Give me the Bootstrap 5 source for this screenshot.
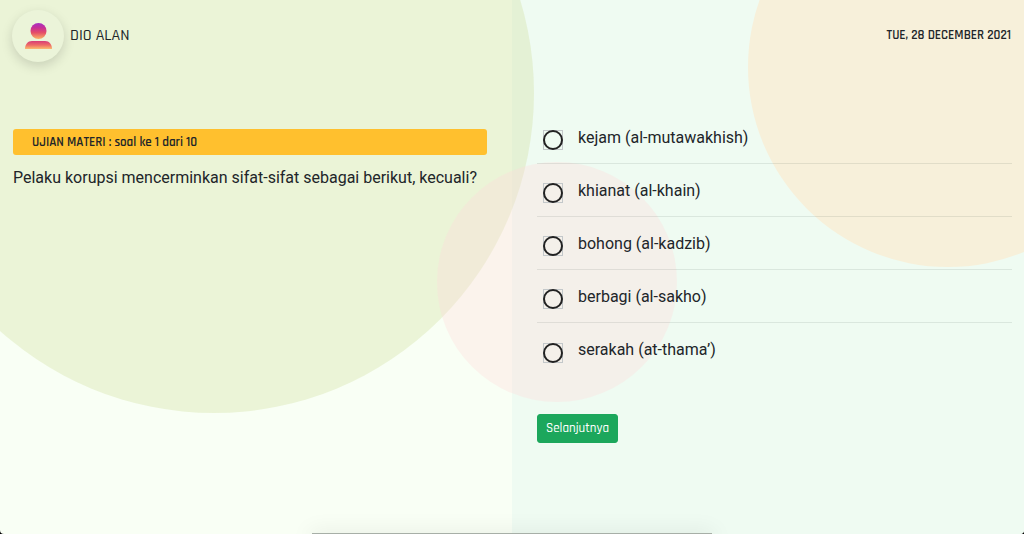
<!DOCTYPE html>
<html lang="id">
<head>
<meta charset="utf-8">
<meta name="viewport" content="width=device-width, initial-scale=1">
<title>Ujian Materi</title>
<link href="https://cdn.jsdelivr.net/npm/bootstrap@5.3.0/dist/css/bootstrap.min.css" rel="stylesheet">
<style>
  html { background: #000; }
  body { background: transparent; font-family: Rajdhani, Roboto, sans-serif; color: #212529; }
  .exam-page { background: #f9fff5; border-radius: 0 0 4px 4px; isolation: isolate; }
  /* decorative backdrop */
  .backdrop { z-index: -1; }
  .disc { position: absolute; border-radius: 50%; }
  .disc-green { width: 640px; height: 640px; left: -106px; top: -227px; background: rgba(207, 222, 154, .33); }
  .disc-cream { width: 400px; height: 400px; right: -124px; top: -133px; background: #f7f0da; }
  .disc-pink { width: 240px; height: 240px; left: calc(50% - 75px); top: 162px; background: rgba(255, 219, 220, .33); }
  .tint { position: absolute; inset: 0 0 0 50%; background: #effbf2; }
  .bar-top { padding: 10px 13px 10px 12px; margin-bottom: 57px; }
  .avatar { width: 52px; height: 52px; background: #ebf4d9; box-shadow: 0 4px 12px rgba(0, 0, 0, .15); margin-right: 6px; }
  .user-name { font-size: 16px; font-weight: 500; }
  .today { font-size: 13px; font-weight: 600; }
  .exam-col { padding: 0 12px; }
  .topic { background: #ffc02e; border-radius: 3px; font-size: 13px; font-weight: 600; line-height: 26px; padding: 0 19px; margin-right: 13px; }
  .reading { font-family: Roboto, sans-serif; font-size: 16px; line-height: 24px; }
  .question { margin-top: 11px; }
  .exam-col:first-child { padding-left: 13px; }
  .choices { margin: -18px 0 0 13px; }
  .choice { min-height: 53px; padding: 1px 6px 0; gap: 15px; border-bottom: 1px solid rgba(40, 60, 50, .1); }
  .choice:last-child { border-bottom: 0; }
  .choice-dot { appearance: none; width: 20px; height: 20px; margin: 5px 0 0; box-shadow: inset 0 0 0 1px #c3c8ca; }
  .choice-dot::before { content: ""; display: block; width: 20px; height: 20px; border: 2px solid #222; border-radius: 50%; }
  .choice-dot:checked::before { background: radial-gradient(#222 45%, transparent 50%); }
  .btn-next { margin: 38px 0 0 13px; padding: 0 8px; font-size: 13px; font-weight: 500; line-height: 27px; border-radius: 3px; --bs-btn-color: #fff; --bs-btn-bg: #1ca75c; --bs-btn-border-color: #1ca75c; --bs-btn-hover-color: #fff; --bs-btn-hover-bg: #168a4b; }
  .dock-edge { width: 400px; height: 1px; background: #a7afa7; box-shadow: 0 4px 22px 2px rgba(0, 0, 0, .2); left: 50%; transform: translateX(-50%); }
</style>
</head>
<body>
<div class="exam-page position-relative min-vh-100 overflow-hidden">
  <div class="backdrop position-absolute top-0 start-0 w-100 h-100 overflow-hidden" aria-hidden="true">
    <div class="tint"></div>
    <div class="disc disc-green"></div>
    <div class="disc disc-cream"></div>
    <div class="disc disc-pink"></div>
  </div>

  <header class="bar-top d-flex align-items-center justify-content-between">
    <div class="d-flex align-items-center">
      <span class="avatar rounded-circle d-flex align-items-center justify-content-center">
        <svg width="28" height="28" viewBox="0 0 28 28" aria-hidden="true">
          <defs>
            <linearGradient id="head" x1="0" y1="0" x2="0" y2="1">
              <stop offset="0" stop-color="#a72fc4"/><stop offset=".3" stop-color="#c72f96"/><stop offset=".6" stop-color="#e44d69"/><stop offset="1" stop-color="#fbb365"/>
            </linearGradient>
            <linearGradient id="torso" x1="0" y1="0" x2="0" y2="1">
              <stop offset="0" stop-color="#d83b78"/><stop offset=".5" stop-color="#ed6a66"/><stop offset="1" stop-color="#fbbd70"/>
            </linearGradient>
          </defs>
          <circle cx="14.500" cy="9" r="8" fill="url(#head)"/>
          <path d="M1 27c0-4.600 2.800-8 7-8h13c4.200 0 7 3.400 7 8z" fill="url(#torso)"/>
        </svg>
      </span>
      <span class="user-name">DIO ALAN</span>
    </div>
    <time class="today" datetime="2021-12-28">TUE, 28 DECEMBER 2021</time>
  </header>

  <main class="row g-0">
    <section class="exam-col col-6">
      <h1 class="topic mb-0">UJIAN MATERI : soal ke 1 dari 10</h1>
      <p class="question reading mb-0">Pelaku korupsi mencerminkan sifat-sifat sebagai berikut, kecuali?</p>
    </section>
    <form class="exam-col col-6">
      <div class="choices reading">
        <label class="choice d-flex align-items-center"><input class="choice-dot" type="radio" name="jawaban"><span>kejam (al-mutawakhish)</span></label>
        <label class="choice d-flex align-items-center"><input class="choice-dot" type="radio" name="jawaban"><span>khianat (al-khain)</span></label>
        <label class="choice d-flex align-items-center"><input class="choice-dot" type="radio" name="jawaban"><span>bohong (al-kadzib)</span></label>
        <label class="choice d-flex align-items-center"><input class="choice-dot" type="radio" name="jawaban"><span>berbagi (al-sakho)</span></label>
        <label class="choice d-flex align-items-center"><input class="choice-dot" type="radio" name="jawaban"><span>serakah (at-thama’)</span></label>
      </div>
      <button type="button" class="btn btn-next">Selanjutnya</button>
    </form>
  </main>
  <div class="dock-edge position-absolute bottom-0" aria-hidden="true"></div>
</div>
<script src="https://cdn.jsdelivr.net/npm/bootstrap@5.3.0/dist/js/bootstrap.bundle.min.js"></script>
</body>
</html>
